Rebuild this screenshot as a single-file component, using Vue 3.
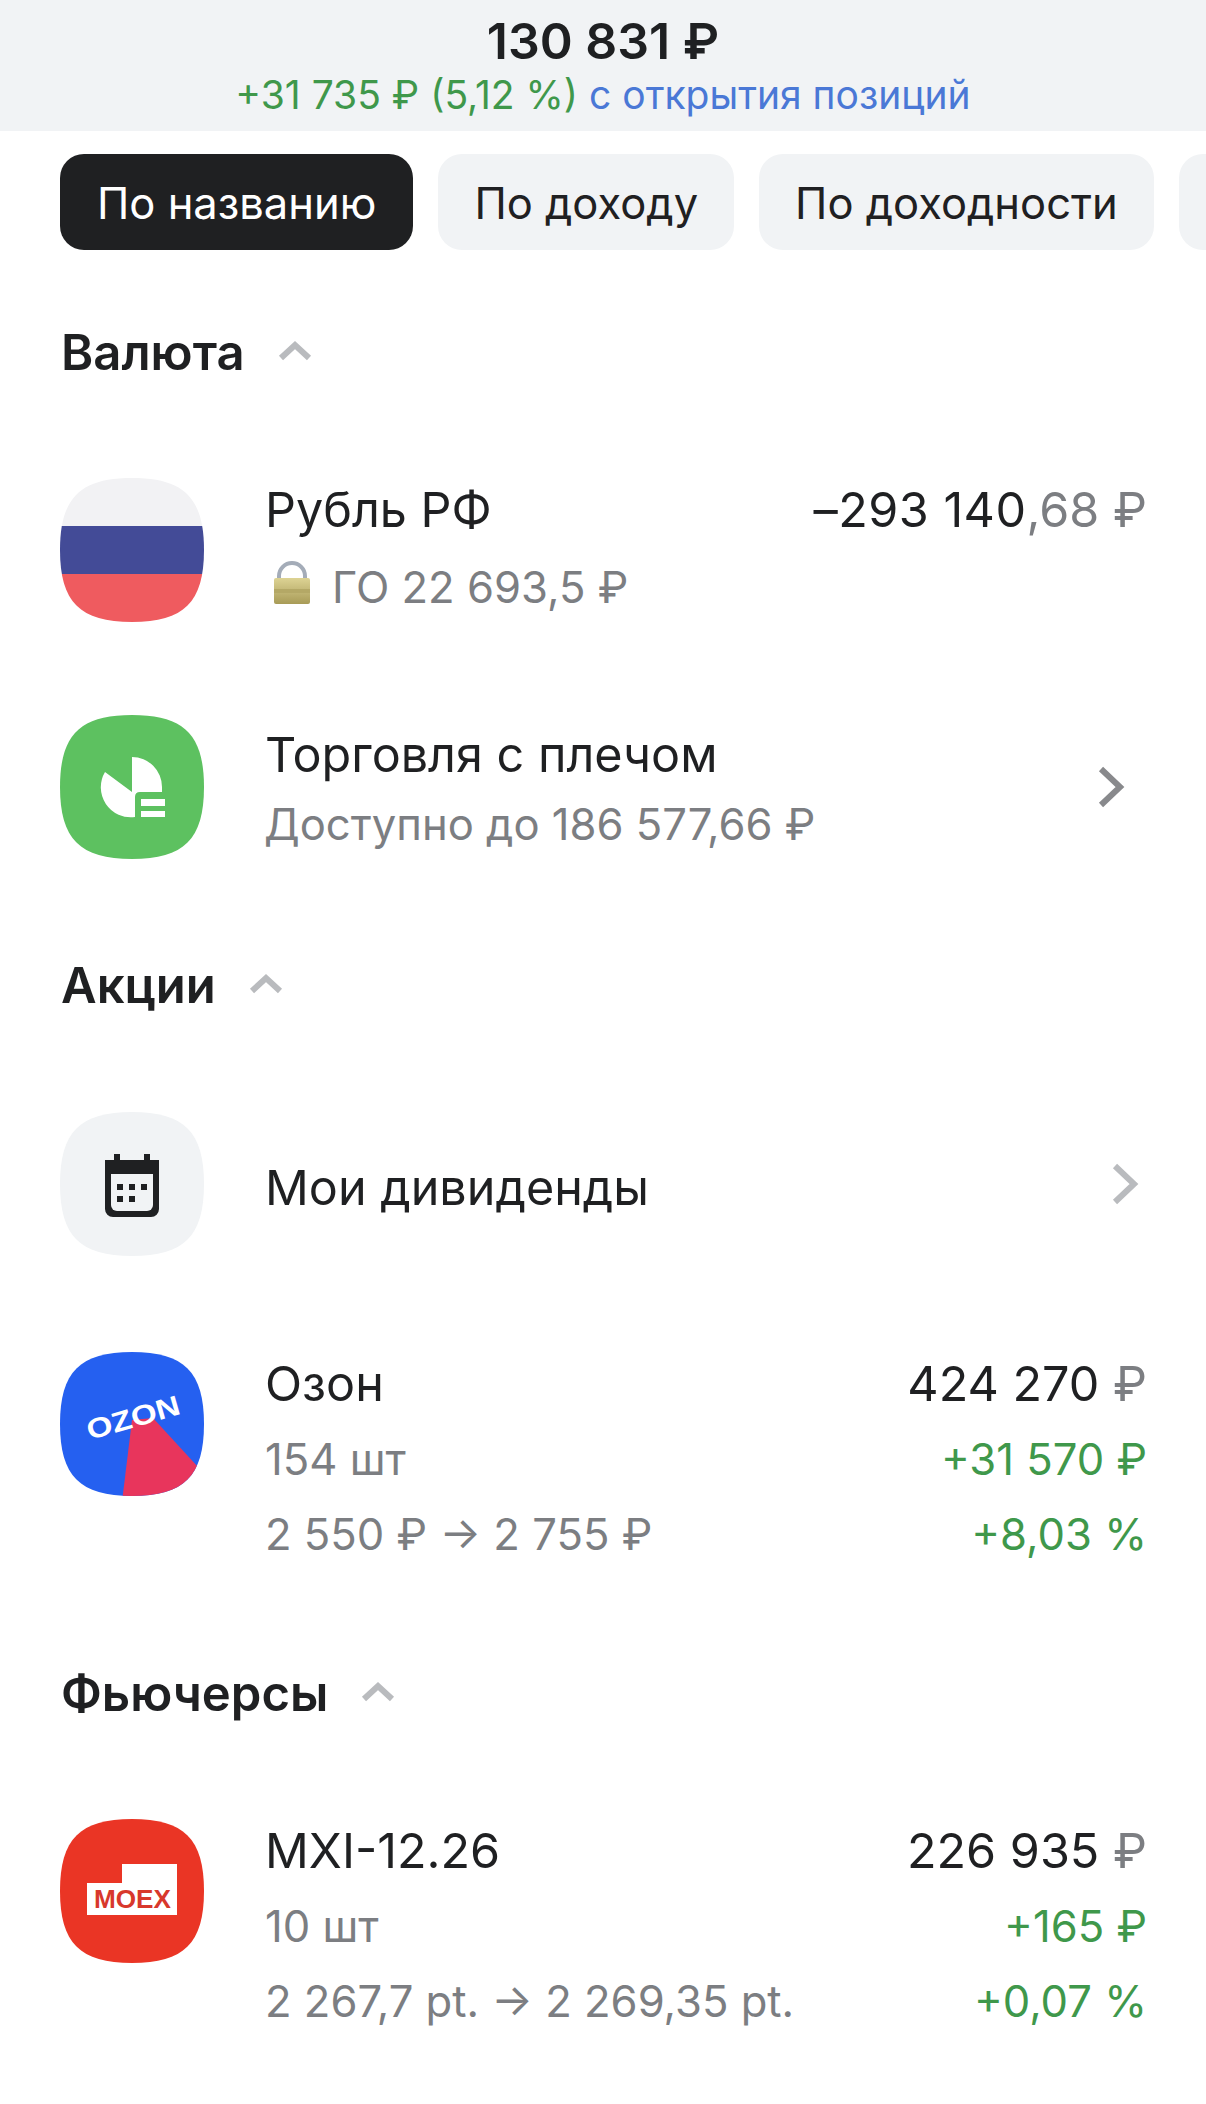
<template>
  <div class="page">
    <header class="total">
      <div class="total-sum">130 831 ₽</div>
      <div class="total-sub"><span class="green">+31 735 ₽ (5,12 %)</span> <span class="blue">с открытия позиций</span></div>
    </header>

    <nav class="chips">
      <div class="chip active">По названию</div>
      <div class="chip">По доходу</div>
      <div class="chip">По доходности</div>
      <div class="chip chip-edge"></div>
    </nav>

    <div class="head head-first">
      <span>Валюта</span>
      <svg class="caret" width="34" height="22" viewBox="0 0 34 22"><path d="M3 19 17 6l14 13" fill="none" stroke="#b9bbbe" stroke-width="6"/></svg>
    </div>

    <div class="row row-first">
      <svg class="icon" viewBox="0 0 144 144">
        <defs><clipPath id="sq"><path :d="squircle"/></clipPath></defs>
        <g clip-path="url(#sq)">
          <rect width="144" height="48" fill="#f2f2f4"/>
          <rect y="48" width="144" height="48" fill="#434b97"/>
          <rect y="96" width="144" height="48" fill="#ef5b5f"/>
        </g>
      </svg>
      <div class="body">
        <div class="title">Рубль РФ</div>
        <div class="sub lock-line">
          <svg class="lock" width="38" height="43" viewBox="0 0 38 43">
            <defs><linearGradient id="brass" x1="0" x2="0" y1="0" y2="1"><stop offset="0" stop-color="#ddd394"/><stop offset="1" stop-color="#a89b57"/></linearGradient></defs>
            <path d="M6 18V15a13 13 0 0 1 26 0v3" fill="none" stroke="#a4acb8" stroke-width="4"/>
            <rect x="1" y="17" width="36" height="26" rx="2" fill="url(#brass)"/>
            <rect x="1" y="28" width="36" height="4" fill="#b4a866"/>
          </svg>
          <span>ГО 22 693,5 ₽</span>
        </div>
      </div>
      <div class="values">
        <div class="title"><span class="amount">–293 140</span><span class="grey">,68 ₽</span></div>
      </div>
    </div>

    <div class="row row-leverage">
      <svg class="icon" viewBox="0 0 144 144">
        <path :d="squircle" fill="#5dc160"/>
        <path d="M72 42A30 30 0 0 1 102 72V77H80Q75 77 75 82V102A30 30 0 0 1 45 57L72 77Z" fill="#fff"/>
        <rect x="81" y="84" width="24" height="7" fill="#fff"/>
        <rect x="81" y="96" width="24" height="6" fill="#fff"/>
      </svg>
      <div class="body">
        <div class="title title-low">Торговля с плечом</div>
        <div class="sub sub-tight">Доступно до 186 577,66 ₽</div>
      </div>
      <svg class="arrow arrow-dark" width="28" height="44" viewBox="0 0 28 44"><path d="M4 4 23 22 4 40" fill="none" stroke="#88898c" stroke-width="6"/></svg>
    </div>

    <div class="head head-shares">
      <span>Акции</span>
      <svg class="caret" width="34" height="22" viewBox="0 0 34 22"><path d="M3 19 17 6l14 13" fill="none" stroke="#b9bbbe" stroke-width="6"/></svg>
    </div>

    <div class="row row-dividends">
      <svg class="icon" viewBox="0 0 144 144">
        <path :d="squircle" fill="#f1f3f5"/>
        <path d="M54 42h6v6h24v-6h6v6h9v49a8 8 0 0 1-8 8H53a8 8 0 0 1-8-8V48h9Z" fill="#1f2022"/>
        <path d="M51 62h42v31a6 6 0 0 1-6 6H57a6 6 0 0 1-6-6Z" fill="#f1f3f5"/>
        <g fill="#1f2022">
          <rect x="57" y="72" width="6" height="6"/><rect x="69" y="72" width="6" height="6"/><rect x="81" y="72" width="6" height="6"/>
          <rect x="57" y="84" width="6" height="6"/><rect x="69" y="84" width="6" height="6"/>
        </g>
      </svg>
      <div class="body"><div class="title">Мои дивиденды</div></div>
      <svg class="arrow arrow-light" width="28" height="44" viewBox="0 0 28 44"><path d="M4 4 23 22 4 40" fill="none" stroke="#b9bbbe" stroke-width="6"/></svg>
    </div>

    <div class="row row-first">
      <svg class="icon" viewBox="0 0 144 144">
        <defs><clipPath id="sq2"><path :d="squircle"/></clipPath></defs>
        <path :d="squircle" fill="#2560f0"/>
        <path d="M72 68 93 66 160 139V150H62Z" fill="#e8355c" clip-path="url(#sq2)"/>
        <text x="73" y="75" transform="rotate(-16 74 65)" text-anchor="middle" class="ozon" textLength="96" lengthAdjust="spacingAndGlyphs">OZON</text>
      </svg>
      <div class="body">
        <div class="title">Озон</div>
        <div class="sub sub-first">154 шт</div>
        <div class="sub">2 550 ₽ → 2 755 ₽</div>
      </div>
      <div class="values">
        <div class="title">424 270 <span class="grey">₽</span></div>
        <div class="sub sub-first green">+31 570 ₽</div>
        <div class="sub green">+8,03 %</div>
      </div>
    </div>

    <div class="head head-futures">
      <span>Фьючерсы</span>
      <svg class="caret" width="34" height="22" viewBox="0 0 34 22"><path d="M3 19 17 6l14 13" fill="none" stroke="#b9bbbe" stroke-width="6"/></svg>
    </div>

    <div class="row row-first">
      <svg class="icon" viewBox="0 0 144 144">
        <path :d="squircle" fill="#ea3525"/>
        <path d="M27 64H62V45H117V96H27Z" fill="#fff"/>
        <text x="34" y="89" class="moex" textLength="77" lengthAdjust="spacingAndGlyphs">MOEX</text>
      </svg>
      <div class="body">
        <div class="title">MXI-12.26</div>
        <div class="sub sub-first">10 шт</div>
        <div class="sub">2 267,7 pt. → 2 269,35 pt.</div>
      </div>
      <div class="values">
        <div class="title">226 935 <span class="grey">₽</span></div>
        <div class="sub sub-first green">+165 ₽</div>
        <div class="sub green">+0,07 %</div>
      </div>
    </div>
  </div>
</template>

<script setup>
const squircle = 'M72 0C124 0 144 20 144 72S124 144 72 144 0 124 0 72 20 0 72 0Z'
</script>

<style>
html, body { background: #fff; overflow: hidden; }
</style>

<style scoped>
.page {
  width: 1206px;
  height: 2104px;
  overflow: hidden;
  background: #fff;
  color: #1f2022;
  font-family: Inter, "Noto Sans", sans-serif;
}

.total {
  height: 131px;
  background: #f1f3f5;
  text-align: center;
  padding-top: 14px;
  box-sizing: border-box;
}
.total-sum { font-size: 50px; line-height: 54px; font-weight: 600; }
.total-sub { font-size: 39px; line-height: 42px; margin-top: 6px; }

.green { color: #3f984b; }
.blue { color: #4a78d6; }
.grey { color: #7c7e82; }

.chips {
  display: flex;
  gap: 25px;
  margin-top: 23px;
  padding-left: 60px;
  white-space: nowrap;
}
.chip {
  flex: none;
  height: 96px;
  line-height: 99px;
  padding: 0 36px;
  border-radius: 24px;
  background: #f1f3f5;
  font-size: 43.5px;
}
.chip.active { background: #1f2022; color: #fff; padding: 0 37px; }
.chip-edge { width: 120px; }

.head {
  display: flex;
  align-items: center;
  gap: 33px;
  height: 60px;
  padding-left: 61px;
  font-size: 49px;
  font-weight: 600;
}
.head .caret { margin-top: -4px; }
.head-first { margin-top: 72px; }
.head-shares { margin-top: 96px; }
.head-futures { margin-top: 91px; }

.row {
  display: flex;
  padding: 0 59px 0 60px;
  min-height: 144px;
}
.row-first { margin-top: 96px; }
.row-leverage { margin-top: 90px; }
.row-dividends { margin-top: 97px; align-items: center; }
.row-dividends .body { margin-top: 8px; }

.icon { flex: none; width: 144px; height: 144px; margin-right: 61px; }
.body { flex: 1; min-width: 0; white-space: nowrap; }
.values { text-align: right; white-space: nowrap; }

.title { font-size: 48.5px; line-height: 64px; }
.title-low { margin-top: 8px; }
.amount { letter-spacing: 0.5px; }
.sub { font-size: 43.6px; line-height: 75px; color: #7c7e82; }
.sub-first { margin-top: 6px; }
.values .sub.green { color: #3f984b; }
.sub-tight { line-height: 66px; margin-top: 5px; margin-left: -1px; }

.lock-line { display: flex; align-items: center; gap: 21px; margin-top: 8px; padding-left: 8px; }
.lock { flex: none; margin-top: -10px; }

.arrow { flex: none; align-self: center; }
.arrow-dark { margin-right: 22px; }
.arrow-light { margin-right: 8px; }

.ozon { font-family: "Liberation Sans", sans-serif; font-weight: 700; font-size: 28px; fill: #fff; }
.moex { font-family: "Liberation Sans", sans-serif; font-weight: 700; font-size: 25px; fill: #d8382c; }
</style>
